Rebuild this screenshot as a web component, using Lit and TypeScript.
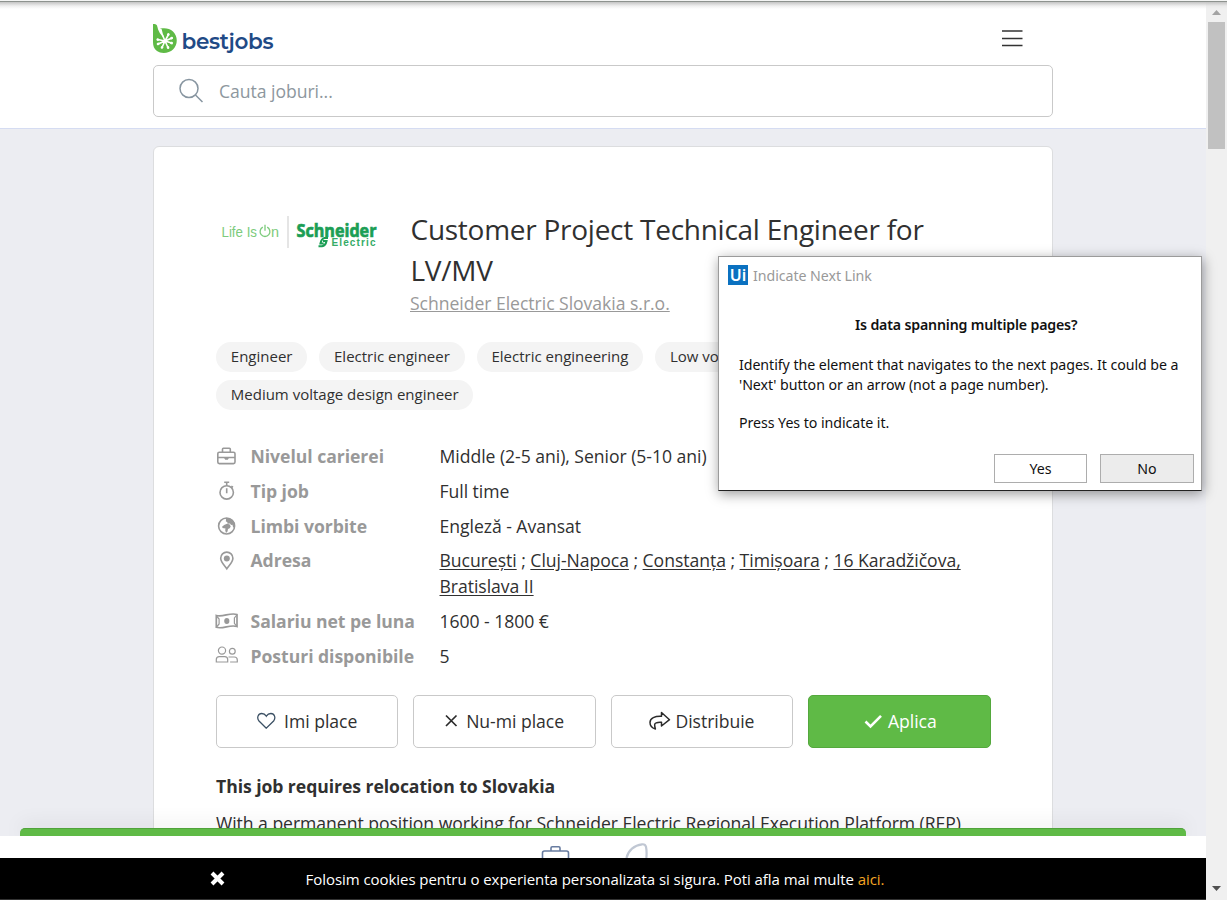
import { LitElement, html, css, svg } from "lit";
import { customElement } from "lit/decorators.js";

const icons = {
  briefcase: svg`<svg width="24" height="24" viewBox="0 0 24 24" fill="none" stroke="currentColor" stroke-width="1.600"><rect x="2.800" y="6.200" width="17.200" height="11.400" rx="1.500"/><path d="M7.500 6V3.200q0-.9.9-.9h6q.9 0 .9.900V6M3 11.500h17"/><path d="M8.800 11.600h5.400l-1.400 2.200h-2.600z" fill="currentColor" stroke="none"/></svg>`,
  stopwatch: svg`<svg width="24" height="24" viewBox="0 0 24 24" fill="none" stroke="currentColor" stroke-width="1.600"><circle cx="11.700" cy="12.400" r="6.700"/><path d="M11.700 8.300v5M11.700 3v3M9.200 2.300h5M16.300 6.300l1.700 1"/></svg>`,
  globe: svg`<svg width="24" height="24" viewBox="0 0 24 24"><circle cx="11.600" cy="11" r="8" fill="none" stroke="currentColor" stroke-width="1.600"/><path fill="currentColor" d="M11 3c3-.4 5.500.7 7.200 2.800 1.700 2 1.900 4.300 1.400 6.600l-1.500-.2-.7-2.400-1.400.2-1-1.600-2.300.3-.5-1.700-1.300-.6zM9.600 9.800l2.600-1 2.600.8.900 1.800-1 1.800-1.700.9-.5 2.300-1.500 1.500-.8-2.600.3-1.700-3-.6-.3-1.500z"/></svg>`,
  pin: svg`<svg width="24" height="24" viewBox="0 0 24 24"><path fill="none" stroke="currentColor" stroke-width="1.600" d="M11.800 18.800C10 16 5.700 12.200 5.700 8.200a6.100 6.100 0 0 1 12.200 0c0 4-4.300 7.800-6.100 10.600z"/><circle cx="11.800" cy="8.400" r="3" fill="currentColor"/></svg>`,
  cash: svg`<svg width="24" height="24" viewBox="0 0 24 24" fill="none" stroke="currentColor" stroke-width="1.700"><path d="M1.300 4.500C8 6.500 15 1.200 22 3.500v12c-7-2.300-14 2.900-20.700.8z"/><path d="M1.500 5l2.600 3v5l-2.600 3M21.800 4l-2.400 3v5.300l2.400 3" stroke-width="1.200"/><ellipse cx="11.800" cy="10" rx="2.600" ry="3" fill="currentColor" stroke="none"/></svg>`,
  people: svg`<svg width="24" height="24" viewBox="0 0 24 24" fill="none" stroke="currentColor" stroke-width="1.200"><circle cx="7" cy="5.600" r="3.600"/><circle cx="17.300" cy="6.300" r="2.900"/><path d="M1.300 17v-2.400q0-3 3-3h5.400q3 0 3 3V17zM13.500 12h5.800q3 0 3 3v2h-7.200"/></svg>`,
};

@customElement("app-root")
export class AppRoot extends LitElement {
  static styles = css`
    :host { display: block; position: relative; width: 1227px; height: 900px; overflow: hidden; background: #fff; color: #303030; font: 400 17.600px/26px "Open Sans", sans-serif; letter-spacing: -.04px; }
    * { box-sizing: border-box; }
    svg { display: block; flex: none; }
    .window { display: grid; grid-template-columns: 1206px 21px; height: 900px; }
    .page { background: #ecedf2; height: 900px; overflow: hidden; }
    .top-shadow { position: absolute; left: 0; top: 0; width: 100%; height: 9px; background: linear-gradient(#f4f5f4 0 1px, #8e938f 1px 2px, #c4c4c4 2px, rgba(230,230,230,.6) 6px, rgba(255,255,255,0)); }
    header { height: 129px; background: #fff; border-bottom: 1px solid #d5dcf2; padding: 23px 153px 0; }
    .brandrow { display: flex; height: 42px; justify-content: space-between; }
    .brand { display: flex; gap: 4.500px; }
    .name { color: #1f4a86; font: 600 21.500px/37px "Montserrat", "Open Sans", sans-serif; letter-spacing: -.33px; }
    .menu { margin: 7px 30px 0 0; }
    .search { width: 900px; height: 52px; border: 1px solid #c9c9c9; border-radius: 5px; display: flex; align-items: center; padding-left: 25px; color: #8d979e; gap: 15px; }
    .search svg { margin-top: -2px; }
    .card { width: 900px; margin: 17px 0 0 153px; height: 760px; background: #fff; border: 1px solid #dcdddf; border-radius: 6px; padding: 62px 61px 0 62px; }
    .head { display: flex; height: 133px; }
    .logo { width: 195px; padding: 6px 0 0 5px; }
    .title { font: 400 28px/41px "Open Sans", sans-serif; letter-spacing: -.26px; margin: 0 0 0 -.5px; white-space: nowrap; }
    .company { color: #999; text-decoration: underline; line-height: 24px; display: block; margin-left: -1px; }
    .tags { display: flex; flex-wrap: wrap; gap: 8px 12px; height: 68px; letter-spacing: 0; }
    .tag { background: #f4f4f4; border-radius: 15px; height: 30px; padding: 0 14.800px; font-size: 15px; line-height: 29px; white-space: nowrap; }
    .cut { width: 120px; }
    .facts { display: grid; grid-template-columns: 34.500px 189px 1fr; row-gap: 8.800px; margin-top: 33px; }
    .ico { color: #999; height: 26px; padding-top: 2.500px; margin-left: -1px; }
    .label { color: #999; font-weight: 700; white-space: nowrap; }
    .value { white-space: nowrap; }
    .value u { text-underline-offset: 2px; }
    .actions { display: grid; grid-template-columns: repeat(4, 182.400px); gap: 15px; margin-top: 26px; }
    .btn { height: 53px; border: 1px solid #c9c9c9; border-radius: 5px; display: flex; align-items: center; justify-content: center; padding-bottom: .5px; }
    .apply { background: #5fba46; border-color: #54a83d; color: #fff; padding-left: 2px; }
    h2 { font: 700 17.600px/26px "Open Sans", sans-serif; letter-spacing: -.06px; margin: 25px 0 0; white-space: nowrap; }
    p { margin: 11px 0 0; white-space: nowrap; }
    .bottom { position: absolute; left: 0; top: 828px; width: 1206px; height: 72px; }
    .green { height: 8px; margin: 0 20px; background: #5fba46; border-top: 1px solid #50a33b; border-radius: 5px 5px 0 0; box-shadow: 0 -3px 20px rgba(0,0,0,.1); }
    .nav { height: 22px; position: relative; background: #fff; display: flex; align-items: flex-end; padding-left: 541px; gap: 55px; }
    .cookies { height: 42px; position: relative; background: #000; border-bottom: 1px solid #333; color: #fff; display: flex; align-items: center; font-size: 15px; letter-spacing: -.05px; white-space: nowrap; padding-left: 210px; gap: 80.500px; }
    .link { color: #f5a623; }
    .bar { background: #f0f0f0; display: flex; flex-direction: column; align-items: center; padding-top: 8px; height: 900px; }
    .thumb { width: 17px; height: 127px; background: #c1c1c1; margin-top: 7px; margin-right: 1px; }
    .down { margin-top: auto; margin-bottom: 8px; }
    .dialog { position: absolute; left: 718px; top: 256px; width: 484px; height: 235px; background: #fff; border: 1px solid #9b9b9b; border-bottom: 1px solid #222; box-shadow: 1px 3px 12px rgba(0,0,0,.4); color: #111; font: 400 14.200px/20px "Noto Sans", sans-serif; letter-spacing: -.055px; padding: 8px 7px 0 9px; white-space: nowrap; }
    .caption { display: flex; gap: 5px; color: #999; height: 20px; line-height: 22px; }
    .ui { background: #0b71c0; color: #fff; width: 20px; height: 20px; font: 600 16px/20px "Noto Sans", sans-serif; text-align: center; }
    .question { font-weight: 600; margin: 30px 0 0 127px; letter-spacing: -.18px; }
    .text { margin: 20px 0 0 11px; }
    .press { margin: 18px 0 0 11px; }
    .choices { display: flex; justify-content: flex-end; gap: 13px; margin-top: 21px; }
    .choice { height: 29px; width: 93px; border: 1px solid #adadad; text-align: center; line-height: 27px; }
    .no { background: #ececec; width: 94px; }
  `;

  fact(icon: unknown, label: string, value: unknown) {
    return html`<div class="ico">${icon}</div><div class="label">${label}</div><div class="value">${value}</div>`;
  }

  render() {
    return html`
      <div class="window">
        <div class="page">
          <header>
            <div class="brandrow">
              <div class="brand">
                <svg width="24" height="31" viewBox="0 0 24 31"><path fill="#5fba46" d="M0 1c4 0 5 2 5.300 5.500C9 4.500 16 4.500 20 8.500c5 5 5 13 0 18-4 4-12 4.500-16 1.500C1 26 0 23 0 19z"/><path fill="#fff" d="M4.300 1.700c.2 4.800 1.900 8.300 6.700 13.300L9.700 10.300 8.600 6C7 6.500 5.500 4.500 5.300 1.500z"/><g stroke="#fff" stroke-linecap="round"><path stroke-width="1.600" d="M12 18L9.500 12M12 18l3.500-6.500M12 18l6.500-2.800M12 18l6.500 2M12 18l3 6.500M12 18l-3 6.500M12 18l-7 3M12 18l-7.300-1.500"/><path stroke-width="2.600" d="M15.200 11.700l.2-.4M18.400 15.200l.4-.1M18.300 20l.4.100M15 24.400l.1.300M9 24.500l.1-.2M5 21l.3-.2M4.700 16.600l.2.100"/></g></svg>
                <span class="name">bestjobs</span>
              </div>
              <svg class="menu" width="21" height="18" viewBox="0 0 21 18" stroke="#333" stroke-width="1.500"><path d="M0 1h20.500M0 8.500h20.500M0 15.500h20.500"/></svg>
            </div>
            <div class="search">
              <svg width="25" height="25" viewBox="0 0 25 25" fill="none" stroke="#8795a0" stroke-width="1.500"><circle cx="10" cy="10.500" r="9"/><path d="M16.500 17l7 7"/></svg>
              <span>Cauta joburi...</span>
            </div>
          </header>
          <div class="card">
            <div class="head">
              <svg class="logo" width="195" height="45" viewBox="0 0 190 39">
                <g font-family="Liberation Sans" letter-spacing="0">
                  <text x="0.500" y="22" font-size="15" fill="#7ccb7c" textLength="35.500" lengthAdjust="spacingAndGlyphs">Life Is</text>
                  <text x="50" y="22" font-size="15" fill="#7ccb7c" textLength="8" lengthAdjust="spacingAndGlyphs">n</text>
                  <path d="M41.800 12.200a4.900 4.900 0 1 0 4.400 0M44 9.800v6" fill="none" stroke="#7ccb7c" stroke-width="1.300"/>
                  <path d="M67 1v32" stroke="#ddd" stroke-width="1.500"/>
                  <text x="75.500" y="22" font-family="Open Sans" font-weight="700" font-size="18" fill="#1b9e55" stroke="#1b9e55" stroke-width=".7" textLength="80" lengthAdjust="spacingAndGlyphs">Schneider</text>
                  <text x="110.500" y="31" font-family="Liberation Sans" font-weight="700" font-size="10" fill="#35ab67" textLength="44">Electric</text>
                  <path d="M107 23h-3.500q-3 .5-4 5.500h3.200M97.500 31.300h3.500q3.500-.5 4.500-5.300h-3.500" fill="none" stroke="#1b9e55" stroke-width="2.100"/>
                </g>
              </svg>
              <div>
                <h1 class="title">Customer Project Technical Engineer for<br />LV/MV</h1>
                <span class="company">Schneider Electric Slovakia s.r.o.</span>
              </div>
            </div>
            <div class="tags">
              <span class="tag">Engineer</span>
              <span class="tag">Electric engineer</span>
              <span class="tag">Electric engineering</span>
              <span class="tag cut">Low vo</span>
              <span class="tag">Medium voltage design engineer</span>
            </div>
            <div class="facts">
              ${this.fact(icons.briefcase, "Nivelul carierei", "Middle (2-5 ani), Senior (5-10 ani)")}
              ${this.fact(icons.stopwatch, "Tip job", "Full time")}
              ${this.fact(icons.globe, "Limbi vorbite", "Engleză - Avansat")}
              ${this.fact(icons.pin, "Adresa", html`<u>București</u> ; <u>Cluj-Napoca</u> ; <u>Constanța</u> ; <u>Timișoara</u> ; <u>16 Karadžičova,</u><br /><u>Bratislava II</u>`)}
              ${this.fact(icons.cash, "Salariu net pe luna", "1600 - 1800 €")}
              ${this.fact(icons.people, "Posturi disponibile", "5")}
            </div>
            <div class="actions">
              <div class="btn"><svg width="27" height="18" viewBox="0 0 27 18"><path fill="none" stroke="#3b5064" stroke-width="1.300" d="M9.300 16.200L2 9C-.5 6 1 1.500 4.700 1.500c2 0 3.500 1 4.600 2.700 1.100-1.700 2.600-2.700 4.600-2.700C17.600 1.500 19 6 16.600 9z"/></svg>Imi place</div>
              <div class="btn"><svg width="21" height="14" viewBox="0 0 21 14"><path stroke="#2b2b2b" stroke-width="1.700" d="M1 1.500l10.500 10.500M11.500 1.500L1 12"/></svg>Nu-mi place</div>
              <div class="btn"><svg width="26" height="20" viewBox="0 0 26 20"><path fill="none" stroke="#2b2b2b" stroke-width="1.500" stroke-linejoin="round" d="M12.500 1.500L20.500 8.700l-8 6.300v-3.800c-3.500-.2-6.200.3-6.800 2 -.3 1.500.2 3 .7 4.800C3 17 1 14.500 1 11.500c0-4.500 5-6.500 11.500-6.200z"/></svg>Distribuie</div>
              <div class="btn apply"><svg width="24" height="15" viewBox="0 0 24 15"><path fill="none" stroke="#fff" stroke-width="2.600" d="M1.500 7.500l5 5L17 1.800"/></svg>Aplica</div>
            </div>
            <h2>This job requires relocation to Slovakia</h2>
            <p>With a permanent position working for Schneider Electric Regional Execution Platform (REP)</p>
          </div>
        </div>
        <div class="bar">
          <svg width="9" height="7" viewBox="0 0 9 7"><path d="M0 7l4.500-5L9 7z" fill="#a3a3a3"/></svg>
          <div class="thumb"></div>
          <svg class="down" width="9" height="6" viewBox="0 0 9 6"><path d="M0 0h9L4.500 5z" fill="#505050"/></svg>
        </div>
      </div>
      <div class="bottom">
        <div class="green"></div>
        <div class="nav">
          <svg width="29" height="14" viewBox="0 0 29 14" fill="none" stroke="#687ca0" stroke-width="1.600"><path d="M1.500 14V9q0-2 2-2h22q2 0 2 2v5M10 7V4q0-1.200 1.200-1.200h6.600Q19 2.800 19 4v3"/></svg>
          <svg width="24" height="15" viewBox="0 0 24 15" fill="none" stroke="#c0c7d3" stroke-width="2.200"><path d="M1.500 15C3 7.500 9.500 2 17 1.300c2-.2 3.500.500 4 2.500.600 3 .800 7 .300 11.200"/></svg>
        </div>
        <div class="cookies">
          <svg width="15" height="15" viewBox="0 0 15 15"><path stroke="#fff" stroke-width="4" d="M2 2l11 11M13 2L2 13"/></svg>
          <span>Folosim cookies pentru o experienta personalizata si sigura. Poti afla mai multe <span class="link">aici.</span></span>
        </div>
      </div>
      <div class="dialog">
        <div class="caption"><span class="ui">Ui</span><span>Indicate Next Link</span></div>
        <div class="question">Is data spanning multiple pages?</div>
        <div class="text">Identify the element that navigates to the next pages. It could be a<br />'Next' button or an arrow (not a page number).</div>
        <div class="press">Press Yes to indicate it.</div>
        <div class="choices"><div class="choice">Yes</div><div class="choice no">No</div></div>
      </div>
      <div class="top-shadow"></div>
    `;
  }
}
